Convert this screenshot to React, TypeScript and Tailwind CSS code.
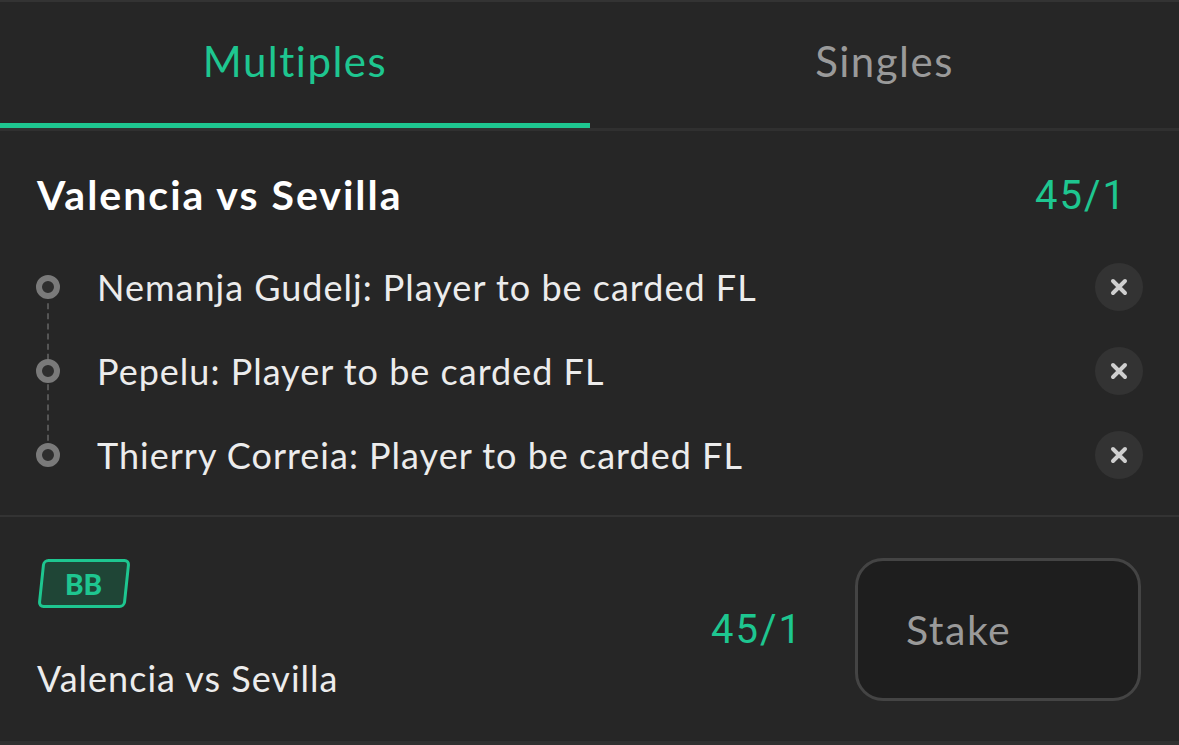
import React from "react";

const items = [
  "Nemanja Gudelj: Player to be carded FL",
  "Pepelu: Player to be carded FL",
  "Thierry Correia: Player to be carded FL",
];

function CloseBtn() {
  return (
    <div className="w-12 h-12 rounded-full bg-[#333333] flex items-center justify-center shrink-0">
      <svg width="20" height="20" viewBox="0 0 20 20">
        <path d="M4 4 L16 16 M16 4 L4 16" stroke="#cfcfcf" strokeWidth="4" strokeLinecap="round" />
      </svg>
    </div>
  );
}

export default function App() {
  return (
    <div
      className="w-[1179px] h-[745px] bg-[#262626] text-[#ededed] overflow-hidden flex flex-col"
      style={{ fontFamily: "Lato, 'Open Sans', sans-serif" }}
    >
      <div className="h-[2px] bg-[#333333]" />
      {/* Tabs */}
      <div className="flex h-[121px]">
        <div className="w-[590px] flex items-center justify-center text-[42px] tracking-[1.5px] text-[#1ec690] pb-[2px]">
          Multiples
        </div>
        <div className="flex-1 flex items-center justify-center text-[42px] tracking-[1.5px] text-[#9a9a9a] pb-[2px]">
          Singles
        </div>
      </div>
      <div className="flex">
        <div className="w-[590px] h-[5px] bg-[#1ec690]" />
      </div>
      <div className="h-[3px] bg-[#303030]" />

      {/* Event header */}
      <div className="flex items-center justify-between pl-[37px] pr-[52px] pt-[41px]">
        <div className="text-[41px] tracking-[2px] font-bold text-white leading-none">Valencia vs Sevilla</div>
        <div
          className="text-[40px] text-[#1ec690] leading-none tracking-[2px] pt-[4px]"
          style={{ fontFamily: "Roboto, sans-serif" }}
        >
          45/1
        </div>
      </div>

      {/* Selections */}
      <div className="relative mt-[47px] pl-[36px] pr-[36px]">
        <div className="absolute left-[47px] top-[30px] h-[168px] w-[2px] border-l-2 border-dashed border-[#555555]" />
        <div className="flex flex-col gap-[36px]">
          {items.map((t) => (
            <div key={t} className="flex items-center h-12">
              <div className="relative w-6 h-6 rounded-full border-[6px] border-[#7a7a7a] bg-[#2e2e2e] shrink-0" />
              <div className="ml-[37px] flex-1 text-[36px] tracking-[1px] text-[#ececec] leading-none">{t}</div>
              <CloseBtn />
            </div>
          ))}
        </div>
      </div>

      <div className="mt-[36px] h-[2px] bg-[#333333]" />

      {/* Bottom bet */}
      <div className="flex-1 flex items-center pl-[37px] pr-[38px]">
        <div className="flex-1 flex flex-col justify-between h-[142px] pt-[1px]">
          <div className="pl-[3px]">
            <div className="w-[88px] h-[49px] -skew-x-[6deg] rounded-[6px] border-[3px] border-[#1ec690] bg-[#1f4536] flex items-center justify-center">
              <span className="skew-x-[6deg] text-[28px] font-black text-[#1ec690] leading-none">BB</span>
            </div>
          </div>
          <div className="text-[36px] tracking-[1px] text-[#ececec] leading-none pb-[4px]">Valencia vs Sevilla</div>
        </div>
        <div
          className="text-[40px] text-[#1ec690] leading-none tracking-[2px] mr-[52px] pt-[2px]"
          style={{ fontFamily: "Roboto, sans-serif" }}
        >
          45/1
        </div>
        <div className="w-[286px] h-[143px] rounded-[28px] border-[3px] border-[#444444] bg-[#1e1e1e] flex items-center pl-[48px]">
          <span className="text-[41px] tracking-[1.5px] text-[#9a9a9a] leading-none">Stake</span>
        </div>
      </div>
      <div className="h-[4px] bg-[#303030]" />
    </div>
  );
}
